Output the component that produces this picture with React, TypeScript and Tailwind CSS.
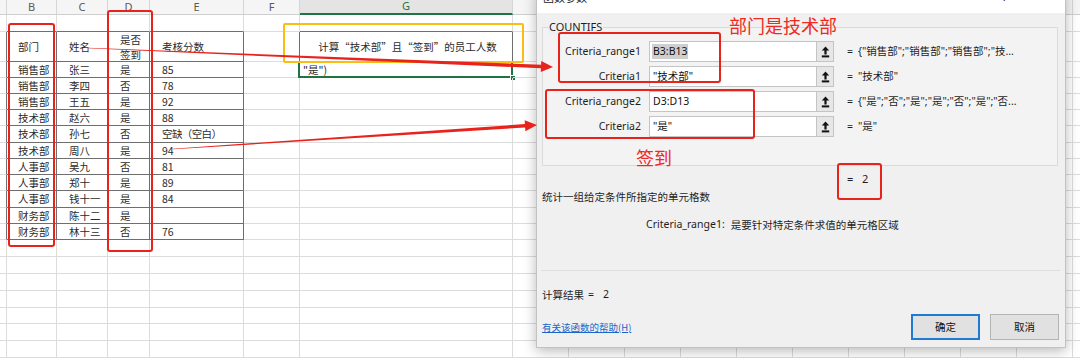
import React from 'react';

const COLS = [7, 50, 51, 42, 94, 56, 213, 56, 56, 56, 56, 56, 56, 56, 56, 56, 56, 56];
const LETTERS = ['', 'B', 'C', 'D', 'E', 'F', 'G', 'H', 'I', 'J', 'K', 'L', 'M', 'N', 'O', 'P', 'Q', 'R'];
const ROW_H = [17, 30, 16, 16, 16, 16, 17, 16, 16, 16, 17, 16, 16, 17, 17, 17, 17, 16, 17, 17];

const DATA: string[][] = [
  ['销售部', '张三', '是', '85'],
  ['销售部', '李四', '否', '78'],
  ['销售部', '王五', '是', '92'],
  ['技术部', '赵六', '是', '88'],
  ['技术部', '孙七', '否', '空缺（空白）'],
  ['技术部', '周八', '是', '94'],
  ['人事部', '吴九', '否', '81'],
  ['人事部', '郑十', '是', '89'],
  ['人事部', '钱十一', '是', '84'],
  ['财务部', '陈十二', '是', ''],
  ['财务部', '林十三', '否', '76'],
];

const CJK = { fontFamily: '"Noto Sans CJK SC", "Noto Sans", sans-serif' };
const UI = { fontFamily: '"Noto Sans", "Noto Sans CJK SC", sans-serif' };

function arrowPts(x1: number, y1: number, x2: number, y2: number, w0: number, w1: number, hl: number, hw: number) {
  const dx = x2 - x1;
  const dy = y2 - y1;
  const L = Math.hypot(dx, dy);
  const ux = dx / L;
  const uy = dy / L;
  const nx = -uy;
  const ny = ux;
  const bx = x2 - ux * hl;
  const by = y2 - uy * hl;
  const p: number[][] = [
    [x1 + (nx * w0) / 2, y1 + (ny * w0) / 2],
    [bx + (nx * w1) / 2, by + (ny * w1) / 2],
    [bx + (nx * hw) / 2, by + (ny * hw) / 2],
    [x2, y2],
    [bx - (nx * hw) / 2, by - (ny * hw) / 2],
    [bx - (nx * w1) / 2, by - (ny * w1) / 2],
    [x1 - (nx * w0) / 2, y1 - (ny * w0) / 2],
  ];
  return p.map((q) => `${q[0].toFixed(2)},${q[1].toFixed(2)}`).join(' ');
}

function cellContent(r: number, c: number): React.ReactNode {
  if (r === 1) {
    if (c === 1) return '部门';
    if (c === 2) return '姓名';
    if (c === 3)
      return (
        <div className="flex flex-col leading-[15px]">
          <span>是否</span>
          <span>签到</span>
        </div>
      );
    if (c === 4) return '考核分数';
    if (c === 6)
      return <div className="w-full text-center">计算“技术部”且“签到”的员工人数</div>;
  }
  if (r >= 2 && r <= 12 && c >= 1 && c <= 4) return DATA[r - 2][c - 1];
  if (r === 2 && c === 6) return '"是")';
  return null;
}

function Cell({ r, c }: { r: number; c: number }) {
  const inTable = r >= 1 && r <= 12;
  const darkR = (inTable && c >= 0 && c <= 4) || (r === 1 && (c === 5 || c === 6));
  const darkB = (c >= 1 && c <= 4 && r >= 0 && r <= 12) || (c === 6 && r === 0);
  const cls = [
    'relative shrink-0 border-r border-b flex items-center whitespace-nowrap text-[10.5px] text-[#2b2b2b]',
    darkR ? 'border-r-[#6e6e6e]' : 'border-r-[#dcdcdc]',
    darkB ? 'border-b-[#6e6e6e]' : 'border-b-[#dcdcdc]',
    c === 1 ? 'pl-[11px]' : c >= 2 && c <= 4 ? 'pl-[12px]' : c === 6 ? 'pl-[3px]' : '',
  ].join(' ');
  const content = cellContent(r, c);
  return (
    <div className={cls} style={{ width: COLS[c], height: ROW_H[r] }}>
      {r === 6 && c === 4 ? <span className="tracking-[-0.6px]">{content}</span> : content}
      {r === 2 && c === 6 && (
        <>
          <div className="absolute left-[-2px] top-[-1px] right-[-1px] bottom-[-1px] border-2 border-[#217346]" />
          <div className="absolute right-[-4px] bottom-[-4px] w-[6px] h-[6px] bg-[#217346] border border-white" />
        </>
      )}
    </div>
  );
}

function RefIcon() {
  return (
    <svg width="9" height="12" viewBox="0 0 9 12">
      <path d="M4.5 0.5 L8.2 4.6 H5.6 V8.4 H3.4 V4.6 H0.8 Z" fill="#111" />
      <rect x="0.8" y="9.4" width="7.4" height="2" fill="#111" />
    </svg>
  );
}

function ArgRow({ label, value, result, sel }: { label: string; value: string; result: string; sel?: boolean }) {
  return (
    <div className="flex items-center h-[21px]">
      <div className="w-[98px] text-right text-[10.5px] text-[#1e1e1e]">{label}</div>
      <div className="ml-[8px] w-[168px] h-[21px] bg-white border border-[#c4c4c4] flex items-center pl-[2px] text-[10.5px] text-[#111]">
        {sel ? <span className="bg-[#cfcfcf] px-[1px]">{value}</span> : <span className="px-[1px]">{value}</span>}
      </div>
      <div className="w-[17px] h-[21px] bg-[#e6e6e6] border border-l-0 border-[#c4c4c4] flex items-center justify-center">
        <RefIcon />
      </div>
      <div className="ml-[13px] w-[11px] text-[10.5px] text-[#1e1e1e]">=</div>
      <div className="text-[10.5px] text-[#1e1e1e] whitespace-nowrap">{result}</div>
    </div>
  );
}

function Dialog() {
  return (
    <div
      className="absolute left-[536px] top-[-10px] w-[530px] h-[358px] bg-[#f0f0f0] border border-[#c2c2c2] shadow-[0_3px_12px_rgba(0,0,0,0.28)] flex flex-col z-[5]"
      style={UI}
    >
      <div className="h-[22px] bg-white flex items-center pl-[6px] pr-[14px] shrink-0">
        <span className="mb-[10px] text-[11px] text-[#222]" style={CJK}>函数参数</span>
        <span className="mb-[10px] ml-auto mr-[36px] text-[11px] text-[#333]">?</span>
        <span className="mb-[10px] text-[14px] text-[#333] leading-none">×</span>
      </div>

      <div className="relative ml-[5px] mt-[14px] w-[516px] h-[139px] border border-[#dadada] bg-[#f3f3f3] pt-[13px] flex flex-col gap-[4px] shrink-0">
        <span className="absolute left-[5px] top-[-9px] bg-[#f0f0f0] px-[1px] text-[11px] leading-[16px] text-[#1e1e1e]">COUNTIFS</span>
        <ArgRow label="Criteria_range1" value="B3:B13" result={'{"销售部";"销售部";"销售部";"技...'} sel />
        <ArgRow label="Criteria1" value={'"技术部"'} result={'"技术部"'} />
        <ArgRow label="Criteria_range2" value="D3:D13" result={'{"是";"否";"是";"是";"否";"是";"否...'} />
        <ArgRow label="Criteria2" value={'"是"'} result={'"是"'} />
      </div>

      <div className="mt-[5px] h-[17px] pl-[310px] flex items-center text-[11px] text-[#1e1e1e] shrink-0">
        <span className="w-[15px]">=</span>
        <span>2</span>
      </div>
      <div className="h-[17px] pl-[5px] flex items-center text-[10.5px] text-[#1e1e1e] shrink-0" style={CJK}>
        统计一组给定条件所指定的单元格数
      </div>
      <div className="mt-[11px] h-[17px] pl-[109px] flex items-center text-[10.5px] text-[#1e1e1e] shrink-0 whitespace-nowrap">
        <span>Criteria_range1:</span>
        <span className="ml-[6px]" style={CJK}>是要针对特定条件求值的单元格区域</span>
      </div>
      <div className="mt-[37px] ml-[4px] mr-[5px] border-t border-[#dedede] shrink-0" />
      <div className="mt-[15px] h-[17px] pl-[5px] flex items-center text-[10.5px] text-[#1e1e1e] shrink-0 whitespace-nowrap">
        <span style={CJK}>计算结果</span>
        <span className="ml-[4px]">=</span>
        <span className="ml-[9px]">2</span>
      </div>
      <div className="mt-[11px] h-[26px] pl-[5px] pr-[6px] flex items-center shrink-0">
        <span className="text-[9.5px] text-[#1a66c8] underline" style={CJK}>有关该函数的帮助(H)</span>
        <div className="ml-auto w-[69px] h-[26px] bg-[#e1e1e1] border-2 border-[#1f7ad6] flex items-center justify-center text-[10.5px] text-[#111]" style={CJK}>
          确定
        </div>
        <div className="ml-[10px] w-[69px] h-[26px] bg-[#e1e1e1] border border-[#b4b4b4] flex items-center justify-center text-[10.5px] text-[#111]" style={CJK}>
          取消
        </div>
      </div>
    </div>
  );
}

export default function App() {
  const red = '#e8231c';
  return (
    <div className="relative w-[1080px] h-[358px] overflow-hidden bg-white" style={CJK}>
      {/* Column header */}
      <div className="flex h-[15px]">
        {COLS.map((w, c) => (
          <div
            key={c}
            className={
              c === 6
                ? 'shrink-0 border-r border-r-[#d6d6d6] border-b-2 border-b-[#217346] bg-[#e4e4e4] text-[#217346] flex items-center justify-center text-[11px]'
                : 'shrink-0 border-r border-r-[#d6d6d6] border-b border-b-[#cfcfcf] bg-[#f5f5f5] text-[#5a5a5a] flex items-center justify-center text-[11px]'
            }
            style={{ width: w, ...UI }}
          >
            {LETTERS[c]}
          </div>
        ))}
      </div>
      {/* Rows */}
      {ROW_H.map((h, r) => (
        <div key={r} className="flex" style={{ height: h }}>
          {COLS.map((_, c) => (
            <Cell key={c} r={r} c={c} />
          ))}
        </div>
      ))}

      <Dialog />

      {/* Annotation overlays */}
      <div className="absolute left-[283px] top-[23px] w-[241px] h-[40px] border-2 border-[#fbbd14] rounded-[2px] z-10" />
      <div className="absolute left-[8px] top-[23px] w-[47px] h-[224px] border-[2.5px] border-[#e8231c] rounded-[3px] z-10" />
      <div className="absolute left-[107px] top-[10px] w-[46px] h-[242px] border-[2.5px] border-[#e8231c] rounded-[3px] z-10" />
      <div className="absolute left-[558px] top-[32px] w-[163px] h-[51px] border-2 border-[#e8231c] rounded-[3px] z-10" />
      <div className="absolute left-[545px] top-[89px] w-[210px] h-[50px] border-2 border-[#e8231c] rounded-[3px] z-10" />
      <div className="absolute left-[837px] top-[163px] w-[45px] h-[37px] border-2 border-[#e8231c] rounded-[3px] z-10" />
      <div className="absolute left-[729px] top-[14px] text-[18px] leading-[22px] text-[#ee2a24] z-10 whitespace-nowrap">部门是技术部</div>
      <div className="absolute left-[636px] top-[146px] text-[18px] leading-[22px] text-[#ee2a24] z-10 whitespace-nowrap">签到</div>

      <svg className="absolute left-0 top-0 z-20 pointer-events-none" width="1080" height="358">
        <polygon points={arrowPts(88, 48, 553, 67, 0.7, 3.6, 12, 11)} fill={red} />
        <polygon points={arrowPts(173, 149, 537, 125, 0.7, 3.4, 12, 11)} fill={red} />
      </svg>
    </div>
  );
}
